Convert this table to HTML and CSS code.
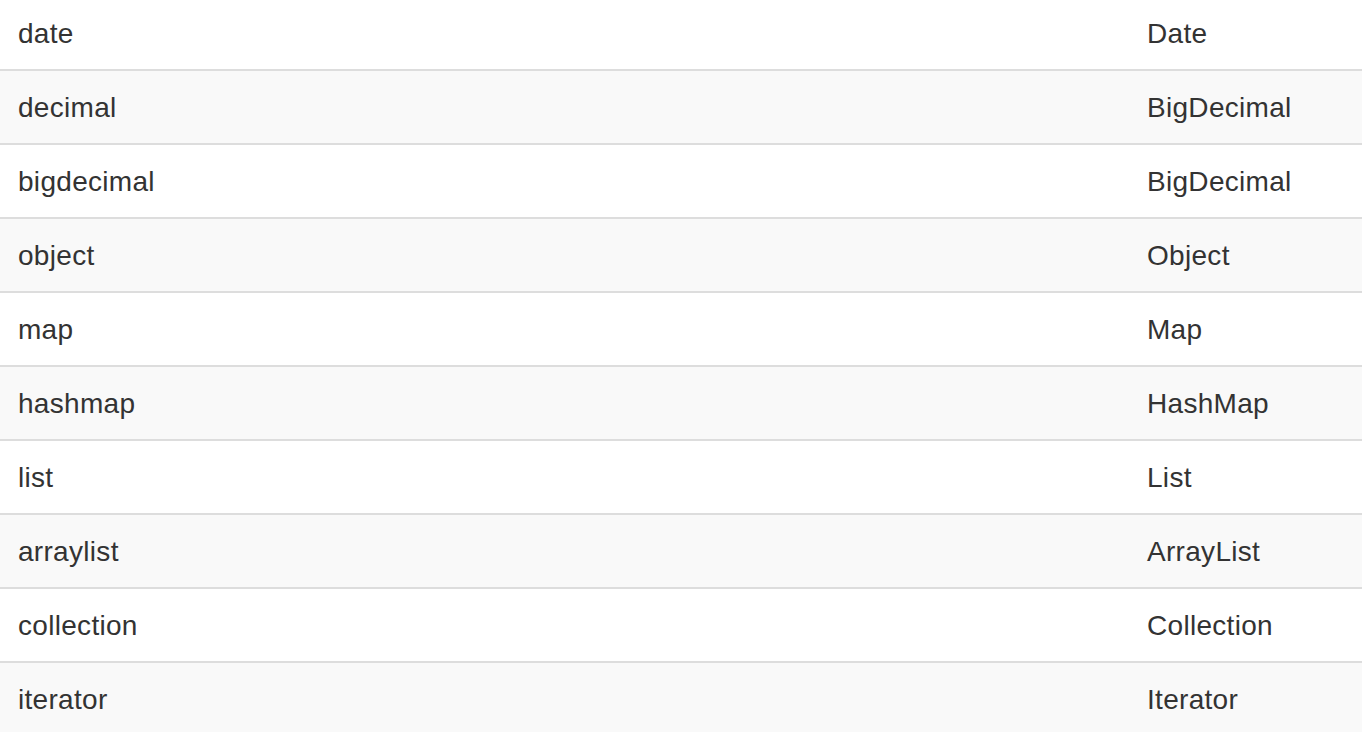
FILE: index.html
```html
<!DOCTYPE html>
<html>
<head>
<meta charset="utf-8">
<link rel="stylesheet" href="styles.css">
</head>
<body>
<table class="types">
<tbody>
<tr><td class="name">date</td><td class="cls">Date</td></tr>
<tr><td class="name">decimal</td><td class="cls">BigDecimal</td></tr>
<tr><td class="name">bigdecimal</td><td class="cls">BigDecimal</td></tr>
<tr><td class="name">object</td><td class="cls">Object</td></tr>
<tr><td class="name">map</td><td class="cls">Map</td></tr>
<tr><td class="name">hashmap</td><td class="cls">HashMap</td></tr>
<tr><td class="name">list</td><td class="cls">List</td></tr>
<tr><td class="name">arraylist</td><td class="cls">ArrayList</td></tr>
<tr><td class="name">collection</td><td class="cls">Collection</td></tr>
<tr><td class="name">iterator</td><td class="cls">Iterator</td></tr>
</tbody>
</table>
</body>
</html>
```

FILE: styles.css
```css
html, body {
  margin: 0;
  padding: 0;
  background: #fff;
  overflow: hidden;
}
body {
  font-family: "Liberation Sans", Arial, Helvetica, sans-serif;
  font-size: 28px;
  line-height: 40px;
  color: #333;
  letter-spacing: 0.3px;
}
.types {
  width: 100%;
  border-collapse: collapse;
  border-spacing: 0;
  margin-top: -5px;
  table-layout: fixed;
}
.types td {
  padding: 17px 16px 15px 17px;
  border-top: 2px solid #ddd;
  text-align: left;
  vertical-align: top;
  white-space: nowrap;
}
.types td.name {
  width: 1096px;
  padding-left: 18px;
}
.types tr:nth-child(even) td {
  background: #f9f9f9;
}
```
